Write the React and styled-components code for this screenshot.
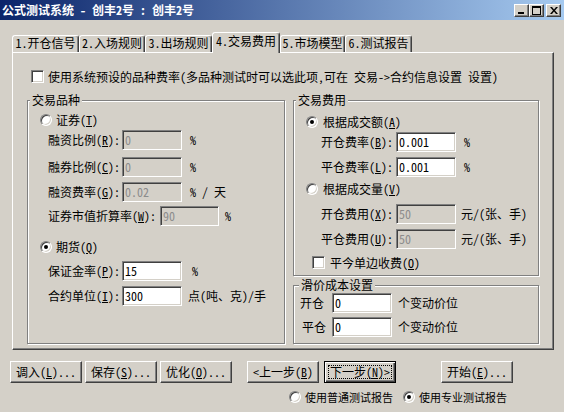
import React from "react";
import styled, { createGlobalStyle } from "styled-components";

const FONT = `"Noto Sans Mono CJK SC", "Noto Sans CJK SC", "DejaVu Sans", sans-serif`;

const GlobalStyle = createGlobalStyle`
  html, body { margin: 0; padding: 0; background: #d4d0c8; }
  body { font-family: ${FONT}; font-size: 12px; color: #000; }
  * { box-sizing: border-box; }
  u { text-underline-offset: 1px; }
`;

const Window = styled.div`
  width: 564px;
  height: 412px;
  background: #d4d0c8;
  overflow: hidden;
  display: flex;
  flex-direction: column;
`;

const TitleBar = styled.div`
  height: 20px;
  flex: none;
  display: flex;
  align-items: center;
  padding: 0 3px 0 2px;
  background: linear-gradient(to right, #0a246a, #a6caf0);
`;
const TitleText = styled.div`
  flex: 1;
  color: #fff;
  font-weight: bold;
  line-height: 14px;
  white-space: pre;
`;
const CaptionButton = styled.div`
  width: 15px;
  height: 13px;
  margin-left: ${p => p.gap || 0}px;
  background: #d4d0c8;
  border: 1px solid;
  border-color: #fff #404040 #404040 #fff;
  box-shadow: inset -1px -1px #808080;
  display: flex;
  align-items: center;
  justify-content: center;
`;

const TabStrip = styled.div`
  height: 32px;
  flex: none;
  display: flex;
  align-items: flex-end;
  padding-left: 12px;
  position: relative;
  z-index: 1;
`;
const Tab = styled.div`
  width: ${p => p.w}px;
  height: ${p => (p.active ? 21 : 17)}px;
  margin-bottom: ${p => (p.active ? -1 : 0)}px;
  padding-top: ${p => (p.active ? 1 : 0)}px;
  background: #d4d0c8;
  border: 1px solid;
  border-bottom: none;
  border-color: #fff #404040 transparent #fff;
  border-radius: 3px 3px 0 0;
  box-shadow: inset -1px 0 #808080;
  display: flex;
  justify-content: center;
  line-height: 14px;
  white-space: nowrap;
`;

const Panel = styled.div`
  margin-left: 12px;
  width: 542px;
  height: 298px;
  flex: none;
  border: 1px solid;
  border-color: #fff #404040 #404040 #fff;
  box-shadow: inset -1px -1px #808080;
`;

const CheckRow = styled.div`
  display: flex;
  align-items: center;
  height: 13px;
  margin: ${p => p.mt || 0}px 0 0 ${p => p.ml || 0}px;
  line-height: 14px;
  white-space: nowrap;
`;
const CheckBox = styled.span`
  width: 13px;
  height: 13px;
  flex: none;
  background: #fff;
  border: 1px solid;
  border-color: #808080 #fff #fff #808080;
  box-shadow: inset 1px 1px #404040, inset -1px -1px #d4d0c8;
`;
const Caption = styled.span`
  margin-left: ${p => p.gap || 4}px;
`;

const Columns = styled.div`
  display: flex;
  align-items: flex-start;
  margin-top: 17px;
  padding-left: 14px;
`;
const Stack = styled.div`
  display: flex;
  flex-direction: column;
  margin-left: ${p => p.ml || 0}px;
`;
const Group = styled.div`
  position: relative;
  width: ${p => p.w}px;
  height: ${p => p.h}px;
  margin-top: ${p => p.mt || 0}px;
  padding-top: ${p => p.pt || 0}px;
  border: 1px solid #808080;
  box-shadow: inset 1px 1px #fff, 1px 1px #fff;
  display: flex;
  flex-direction: column;
`;
const GroupTitle = styled.span`
  position: absolute;
  top: -8px;
  left: ${p => p.left || 2}px;
  padding: 0 2px;
  background: #d4d0c8;
  line-height: 14px;
  white-space: nowrap;
`;

const Row = styled.div`
  display: flex;
  align-items: center;
  height: ${p => p.h || 20}px;
  margin-top: ${p => p.mt || 0}px;
  margin-left: ${p => p.ml || 0}px;
  line-height: 14px;
  white-space: nowrap;
`;
const FieldLabel = styled.span`
  width: ${p => p.w}px;
  padding-left: ${p => p.pl || 0}px;
  flex: none;
`;
const Edit = styled.div`
  width: ${p => p.w || 60}px;
  height: 20px;
  flex: none;
  padding: 2px 0 0 2px;
  background: ${p => (p.disabled ? "#d4d0c8" : "#fff")};
  color: ${p => (p.disabled ? "#8c8c8c" : "#000")};
  border: 1px solid;
  border-color: #808080 #fff #fff #808080;
  box-shadow: inset 1px 1px #404040, inset -1px -1px #d4d0c8;
  line-height: 14px;
  white-space: pre;
`;
const Unit = styled.span`
  margin-left: ${p => p.ml || 8}px;
  white-space: pre;
`;
const Radio = styled.span`
  position: relative;
  width: 12px;
  height: 12px;
  flex: none;
  border-radius: 50%;
  background: #fff;
  border: 1px solid;
  border-color: #808080 #fff #fff #808080;
  box-shadow: inset 1px 1px #404040, inset -1px -1px #d4d0c8;
  &::after {
    content: "";
    display: ${p => (p.checked ? "block" : "none")};
    position: absolute;
    left: 3px;
    top: 3px;
    width: 4px;
    height: 4px;
    border-radius: 50%;
    background: #000;
  }
`;

const ButtonRow = styled.div`
  display: flex;
  height: 22px;
  margin-top: 11px;
  padding-left: 10px;
`;
const Button = styled.div`
  position: relative;
  width: 72px;
  height: 22px;
  margin-left: ${p => p.ml || 0}px;
  display: flex;
  align-items: center;
  justify-content: center;
  line-height: 14px;
  white-space: pre;
  border: 1px solid;
  border-color: ${p => (p.primary ? "#000" : "#fff #404040 #404040 #fff")};
  box-shadow: ${p =>
    p.primary
      ? "inset 1px 1px #fff, inset -1px -1px #404040, inset -2px -2px #808080"
      : "inset -1px -1px #808080"};
  &::after {
    content: "";
    display: ${p => (p.primary ? "block" : "none")};
    position: absolute;
    inset: 3px;
    border: 1px dotted #000;
  }
`;
const ReportRow = styled.div`
  display: flex;
  align-items: center;
  height: 14px;
  margin-top: 7px;
  padding-left: 289px;
  font-size: 11px;
  line-height: 14px;
  white-space: nowrap;
`;
const ReportText = styled.span`
  margin: 0 ${p => p.mr || 0}px 0 4px;
`;

const MinIcon = () => (
  <svg width="9" height="7" viewBox="0 0 9 7">
    <rect x="1" y="5" width="6" height="2" fill="#000" />
  </svg>
);
const MaxIcon = () => (
  <svg width="9" height="9" viewBox="0 0 9 9">
    <rect x="0.5" y="0.5" width="8" height="8" fill="none" stroke="#000" />
    <rect x="0" y="0" width="9" height="2" fill="#000" />
  </svg>
);
const CloseIcon = () => (
  <svg width="8" height="7" viewBox="0 0 8 7">
    <path d="M0 0h2l2 2.5L6 0h2L5 3.5 8 7H6L4 4.5 2 7H0l3-3.5z" fill="#000" />
  </svg>
);

const tabs = [
  ["1.开仓信号", 67],
  ["2.入场规则", 66],
  ["3.出场规则", 67],
  ["4.交易费用", 68, true],
  ["5.市场模型", 65],
  ["6.测试报告", 67],
];

const M = ({ k }) => <u>{k}</u>;

export default function App() {
  return (
    <Window>
      <GlobalStyle />
      <TitleBar>
        <TitleText>公式测试系统 - 创丰2号 : 创丰2号</TitleText>
        <CaptionButton><MinIcon /></CaptionButton>
        <CaptionButton><MaxIcon /></CaptionButton>
        <CaptionButton gap={2}><CloseIcon /></CaptionButton>
      </TitleBar>

      <TabStrip>
        {tabs.map(([t, w, a]) => (
          <Tab key={t} w={w} active={a}>{t}</Tab>
        ))}
      </TabStrip>

      <Panel>
        <CheckRow mt={17} ml={18}>
          <CheckBox />
          <Caption gap={4}>使用系统预设的品种费率(多品种测试时可以选此项,可在 交易-&gt;合约信息设置 设置)</Caption>
        </CheckRow>

        <Columns>
          <Group w={258} h={244} pt={12}>
            <GroupTitle>交易品种</GroupTitle>
            <Row h={14} ml={12}>
              <Radio />
              <Caption>证券(<M k="T" />)</Caption>
            </Row>
            <Row mt={3} ml={20}>
              <FieldLabel w={74}>融资比例(<M k="R" />):</FieldLabel>
              <Edit disabled>0</Edit>
              <Unit>%</Unit>
            </Row>
            <Row mt={7} ml={20}>
              <FieldLabel w={74}>融券比例(<M k="C" />):</FieldLabel>
              <Edit disabled>0</Edit>
              <Unit>%</Unit>
            </Row>
            <Row mt={5} ml={20}>
              <FieldLabel w={74}>融资费率(<M k="G" />):</FieldLabel>
              <Edit disabled>0.02</Edit>
              <Unit>% / 天</Unit>
            </Row>
            <Row mt={4} ml={20}>
              <FieldLabel w={112}>证券市值折算率(<M k="W" />):</FieldLabel>
              <Edit disabled w={59}>90</Edit>
              <Unit ml={6}>%</Unit>
            </Row>
            <Row h={14} mt={14} ml={12}>
              <Radio checked />
              <Caption>期货(<M k="Q" />)</Caption>
            </Row>
            <Row mt={7} ml={20}>
              <FieldLabel w={74}>保证金率(<M k="P" />):</FieldLabel>
              <Edit>15</Edit>
              <Unit ml={10}>%</Unit>
            </Row>
            <Row mt={5} ml={20}>
              <FieldLabel w={74}>合约单位(<M k="I" />):</FieldLabel>
              <Edit>300</Edit>
              <Unit ml={6}>点(吨、克)/手</Unit>
            </Row>
          </Group>

          <Stack ml={8}>
            <Group w={246} h={176} pt={14}>
              <GroupTitle>交易费用</GroupTitle>
              <Row h={14} ml={12}>
                <Radio checked />
                <Caption gap={5}>根据成交额(<M k="A" />)</Caption>
              </Row>
              <Row mt={3} ml={27}>
                <FieldLabel w={75}>开仓费率(<M k="B" />):</FieldLabel>
                <Edit>0.001</Edit>
                <Unit>%</Unit>
              </Row>
              <Row mt={5} ml={27}>
                <FieldLabel w={75}>平仓费率(<M k="L" />):</FieldLabel>
                <Edit>0.001</Edit>
                <Unit>%</Unit>
              </Row>
              <Row h={14} mt={5} ml={12}>
                <Radio />
                <Caption gap={5}>根据成交量(<M k="V" />)</Caption>
              </Row>
              <Row mt={8} ml={27}>
                <FieldLabel w={75}>开仓费用(<M k="X" />):</FieldLabel>
                <Edit disabled>50</Edit>
                <Unit ml={5}>元/(张、手)</Unit>
              </Row>
              <Row mt={5} ml={27}>
                <FieldLabel w={75}>平仓费用(<M k="U" />):</FieldLabel>
                <Edit disabled>50</Edit>
                <Unit ml={5}>元/(张、手)</Unit>
              </Row>
              <CheckRow mt={7} ml={18}>
                <CheckBox />
                <Caption gap={5}>平今单边收费(<M k="O" />)</Caption>
              </CheckRow>
            </Group>

            <Group w={246} h={59} mt={9} pt={7}>
              <GroupTitle left={5}>滑价成本设置</GroupTitle>
              <Row>
                <FieldLabel w={38} pl={6}>开仓</FieldLabel>
                <Edit>0</Edit>
                <Unit ml={6}>个变动价位</Unit>
              </Row>
              <Row mt={4}>
                <FieldLabel w={38} pl={8}>平仓</FieldLabel>
                <Edit>0</Edit>
                <Unit ml={6}>个变动价位</Unit>
              </Row>
            </Group>
          </Stack>
        </Columns>
      </Panel>

      <ButtonRow>
        <Button>调入(<M k="L" />)...</Button>
        <Button ml={3}>保存(<M k="S" />)...</Button>
        <Button ml={3}>优化(<M k="O" />)...</Button>
        <Button ml={15}>&lt;上一步(<M k="B" />)</Button>
        <Button ml={5} primary>下一步(<M k="N" />)&gt;</Button>
        <Button ml={45}>开始(<M k="E" />)...</Button>
      </ButtonRow>

      <ReportRow>
        <Radio />
        <ReportText mr={10}>使用普通测试报告</ReportText>
        <Radio checked />
        <ReportText>使用专业测试报告</ReportText>
      </ReportRow>
    </Window>
  );
}
